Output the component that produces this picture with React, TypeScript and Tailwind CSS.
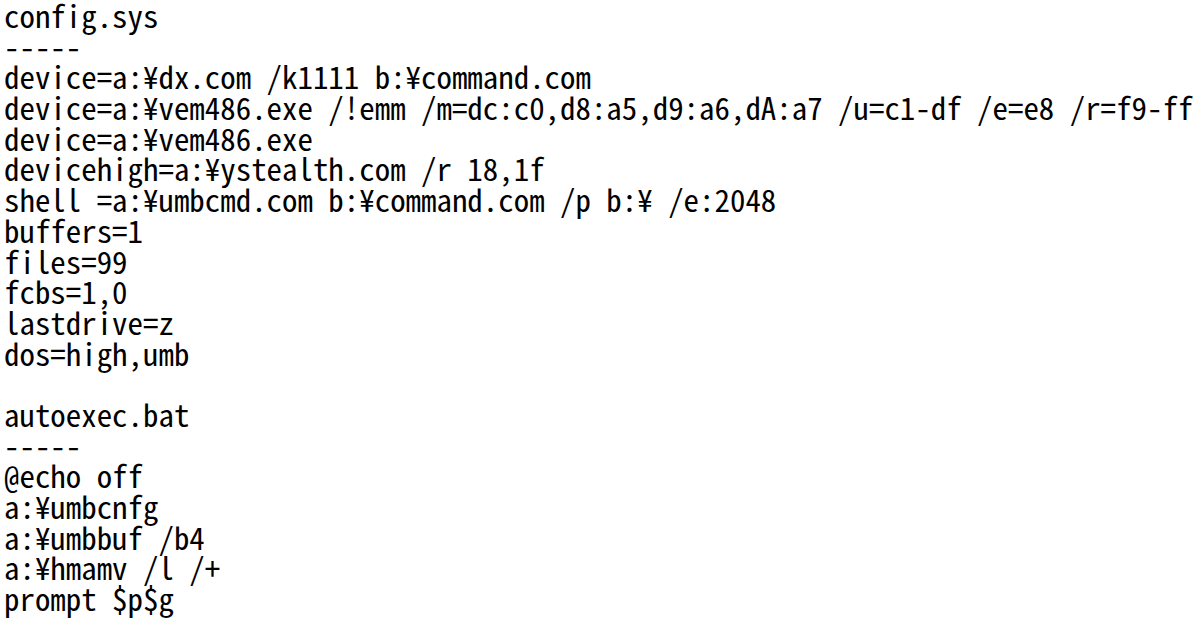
const lines = [
  "config.sys",
  "-----",
  "device=a:¥dx.com /k1111 b:¥command.com",
  "device=a:¥vem486.exe /!emm /m=dc:c0,d8:a5,d9:a6,dA:a7 /u=c1-df /e=e8 /r=f9-ff",
  "device=a:¥vem486.exe",
  "devicehigh=a:¥ystealth.com /r 18,1f",
  "shell =a:¥umbcmd.com b:¥command.com /p b:¥ /e:2048",
  "buffers=1",
  "files=99",
  "fcbs=1,0",
  "lastdrive=z",
  "dos=high,umb",
  "",
  "autoexec.bat",
  "-----",
  "@echo off",
  "a:¥umbcnfg",
  "a:¥umbbuf /b4",
  "a:¥hmamv /l /+",
  "prompt $p$g",
];

export default function App() {
  return (
    <div className="w-[1200px] h-[631px] overflow-hidden bg-white text-black">
      <pre className="pl-[4px] pt-0 m-0 text-[30.9px] leading-[30.7px] font-light font-['Noto_Sans_Mono_CJK_JP','Noto_Sans_CJK_JP',monospace]">
        {lines.map((line, i) => (
          <div key={i} className="h-[30.7px] whitespace-pre">
            {line}
          </div>
        ))}
      </pre>
    </div>
  );
}
